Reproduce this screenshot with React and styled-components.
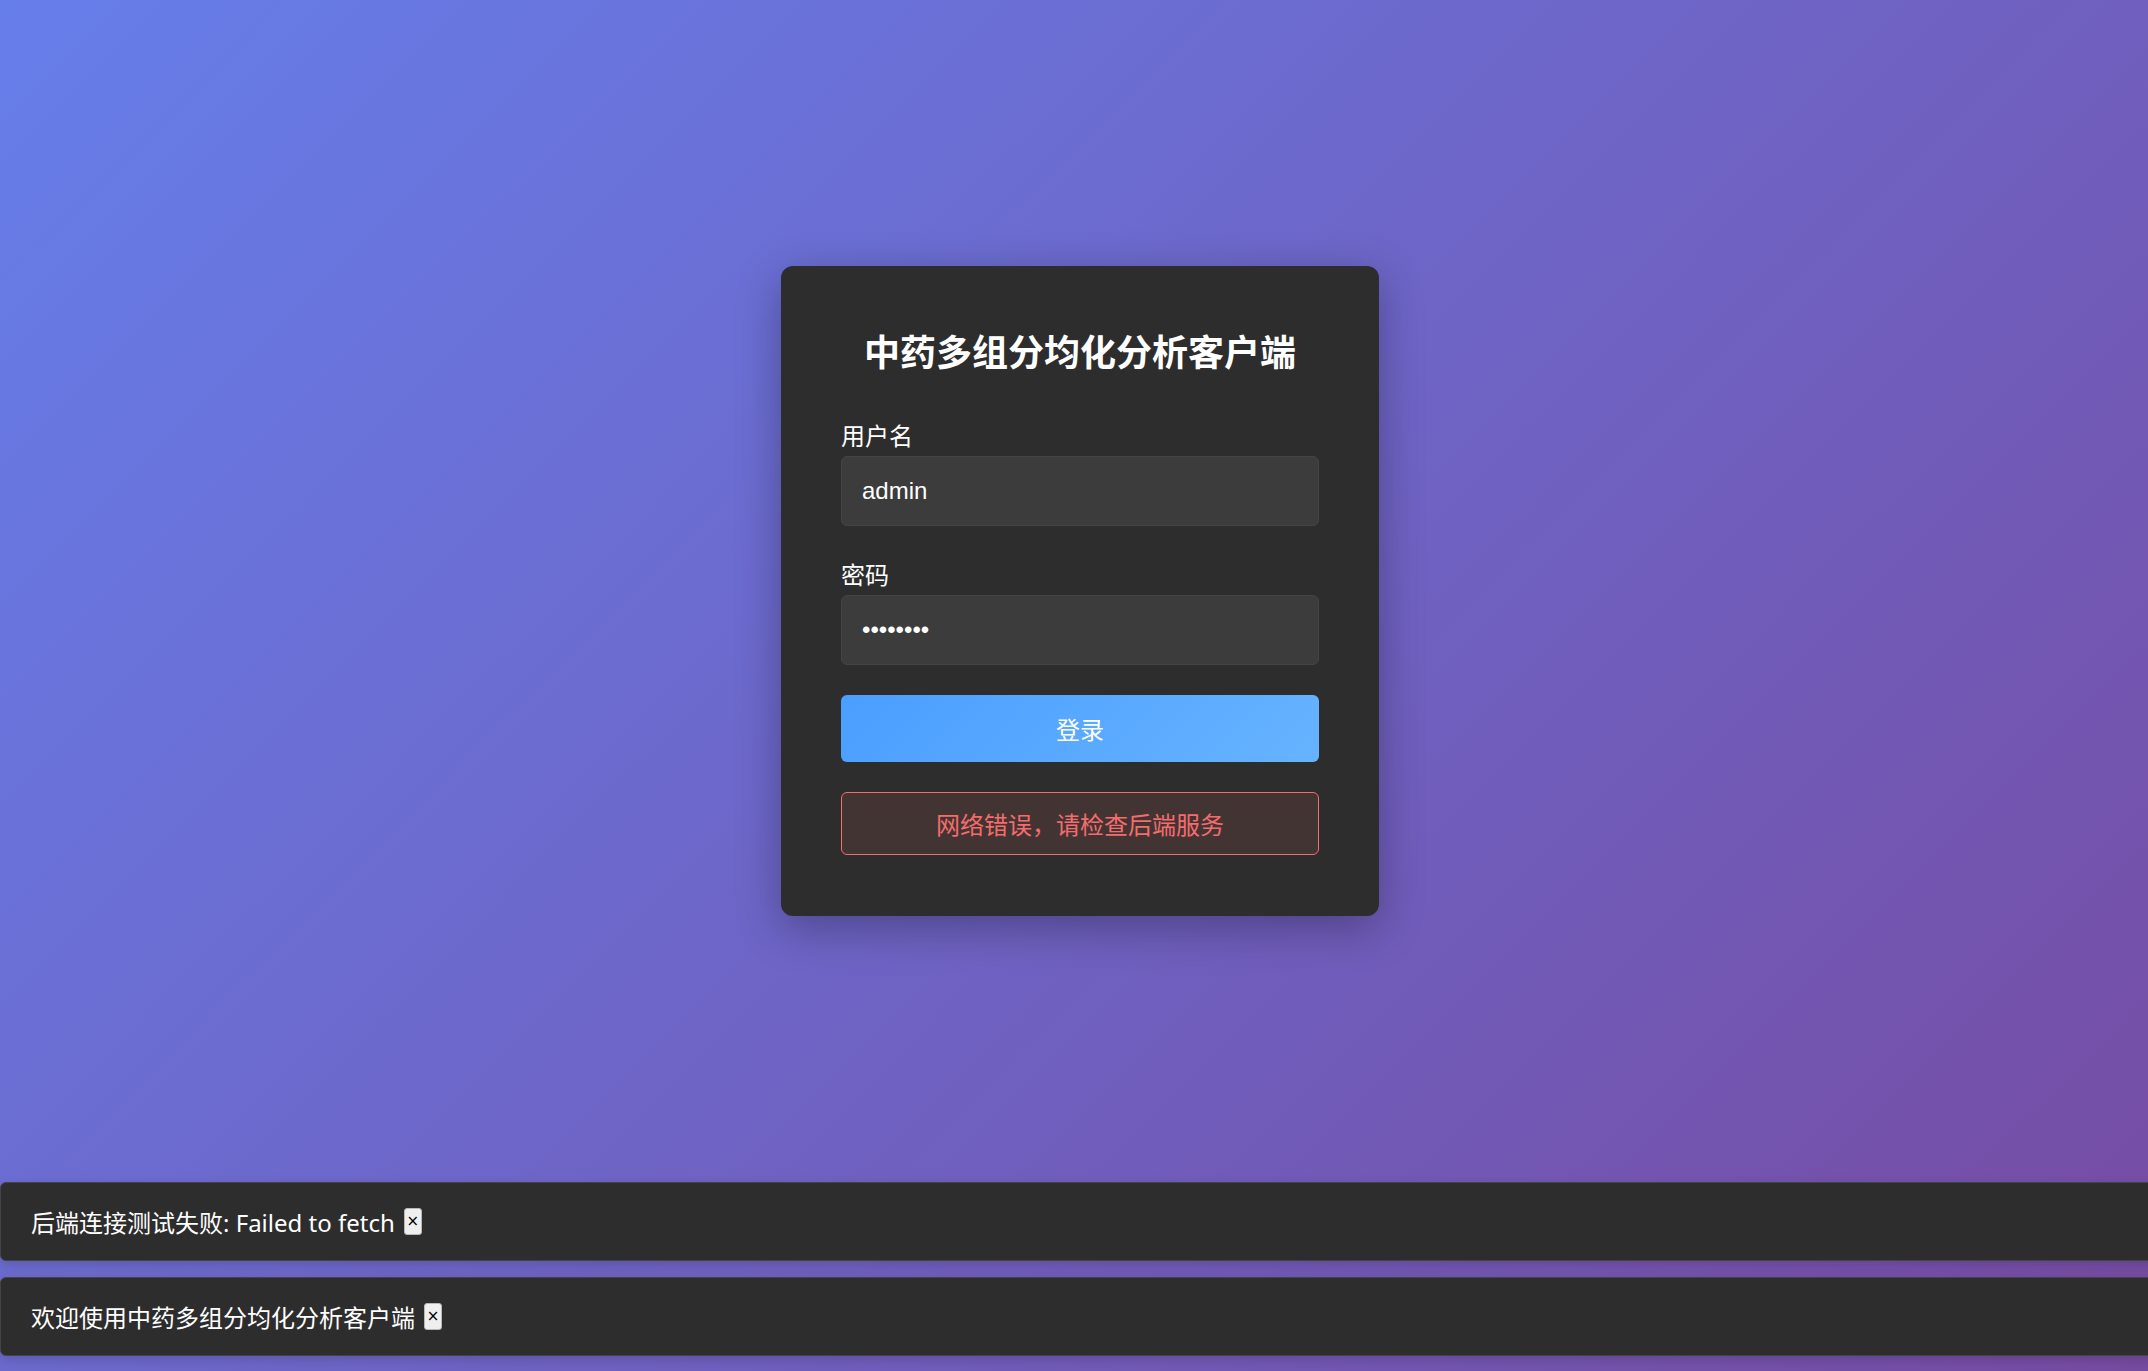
import React, { useState } from 'react';
import styled, { createGlobalStyle } from 'styled-components';

const GlobalStyle = createGlobalStyle`
  html, body {
    margin: 0;
    padding: 0;
    height: 100%;
    overflow: hidden;
  }

  body {
    font-family: "Noto Sans", "Noto Sans CJK SC", sans-serif;
    background: linear-gradient(135deg, #667eea 0%, #764ba2 100%);
  }

  #root {
    height: 100%;
  }
`;

const Page = styled.div`
  height: 100vh;
  display: flex;
  flex-direction: column;
`;

const Main = styled.main`
  flex: 1;
  display: flex;
  align-items: center;
  justify-content: center;
  padding-left: 12px;
`;

const LoginCard = styled.div`
  width: 598px;
  box-sizing: border-box;
  padding: 57px 60px 61px;
  background-color: #2d2d2d;
  border-radius: 12px;
  box-shadow: 0 12px 45px rgba(0, 0, 0, 0.3);
`;

const Title = styled.h1`
  margin: 0 0 42px;
  text-align: center;
  color: #ffffff;
  font-family: "Noto Sans CJK SC", sans-serif;
  font-size: 36px;
  font-weight: 700;
  line-height: 54px;
`;

const FormGroup = styled.div`
  margin-bottom: ${(p) => p.$last ? '30px' : '32px'};
`;

const Label = styled.label`
  display: block;
  margin-bottom: 5px;
  color: #ffffff;
  font-family: "Noto Sans CJK SC", sans-serif;
  font-size: 24px;
  line-height: 32px;
`;

const Input = styled.input`
  display: block;
  width: 100%;
  height: 70px;
  box-sizing: border-box;
  padding: 0 20px;
  background-color: #3c3c3c;
  border: 1px solid #444444;
  border-radius: 6px;
  color: #ffffff;
  font-family: "Liberation Sans", "Noto Sans CJK SC", sans-serif;
  font-size: 24px;
  outline: none;
`;

const LoginButton = styled.button`
  display: block;
  width: 100%;
  height: 67px;
  border: none;
  border-radius: 6px;
  background: linear-gradient(135deg, #4a9eff 0%, #66b3ff 100%);
  color: #ffffff;
  font-family: "Noto Sans CJK SC", sans-serif;
  font-size: 24px;
  cursor: pointer;
`;

const ErrorBox = styled.div`
  margin-top: 30px;
  height: 63px;
  box-sizing: border-box;
  display: flex;
  align-items: center;
  justify-content: center;
  background-color: #433434;
  border: 1.5px solid #f56c6c;
  border-radius: 6px;
  color: #f56c6c;
  font-family: "Noto Sans CJK SC", sans-serif;
  font-size: 24px;
`;

const ToastList = styled.div`
  display: flex;
  flex-direction: column;
  gap: 16px;
  padding-bottom: 15px;
`;

const Toast = styled.div`
  height: 79px;
  box-sizing: border-box;
  margin-right: -12px;
  padding: 0 30px;
  display: flex;
  align-items: center;
  background-color: #2d2d2d;
  border: 1.5px solid #444444;
  border-radius: 6px;
  color: #ffffff;
  font-family: "Noto Sans", "Noto Sans CJK SC", sans-serif;
  font-size: 24px;
  box-shadow: 0 4px 12px rgba(0, 0, 0, 0.15);
`;

const CloseButton = styled.button`
  margin-left: 9px;
  width: 18px;
  height: 27px;
  padding: 0;
  display: flex;
  align-items: center;
  justify-content: center;
  background-color: #efefef;
  border: 1px solid #b8b8b8;
  border-radius: 3px;
  color: #000000;
  font-family: "DejaVu Sans", sans-serif;
  font-size: 15px;
  line-height: 1;
  cursor: pointer;
`;

const initialToasts = [
  { id: 1, text: '后端连接测试失败: Failed to fetch' },
  { id: 2, text: '欢迎使用中药多组分均化分析客户端' },
];

export default function App() {
  const [username, setUsername] = useState('admin');
  const [password, setPassword] = useState('admin123');
  const [toasts, setToasts] = useState(initialToasts);

  return (
    <>
      <GlobalStyle />
      <Page>
        <Main>
          <LoginCard>
            <Title>中药多组分均化分析客户端</Title>
            <FormGroup>
              <Label>用户名</Label>
              <Input value={username} onChange={(e) => setUsername(e.target.value)} />
            </FormGroup>
            <FormGroup $last>
              <Label>密码</Label>
              <Input
                type="password"
                value={password}
                onChange={(e) => setPassword(e.target.value)}
              />
            </FormGroup>
            <LoginButton>登录</LoginButton>
            <ErrorBox>网络错误，请检查后端服务</ErrorBox>
          </LoginCard>
        </Main>
        <ToastList>
          {toasts.map((t) => (
            <Toast key={t.id}>
              {t.text}
              <CloseButton onClick={() => setToasts(toasts.filter((x) => x.id !== t.id))}>
                ×
              </CloseButton>
            </Toast>
          ))}
        </ToastList>
      </Page>
    </>
  );
}
